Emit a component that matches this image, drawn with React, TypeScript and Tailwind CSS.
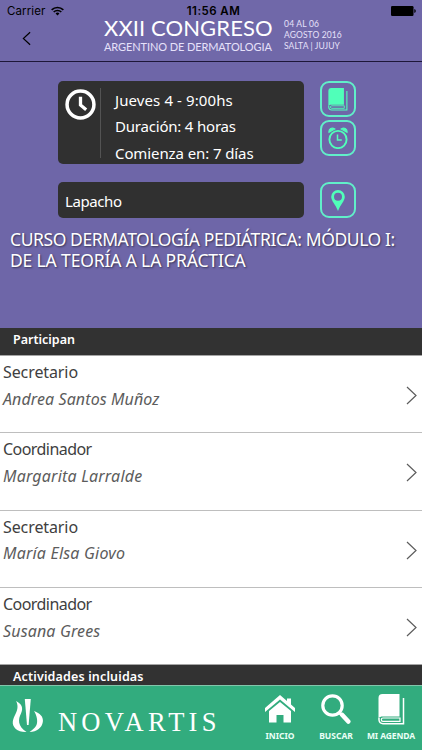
import React from 'react';

const participants = [
  { id: 1, role: 'Secretario', name: 'Andrea Santos Muñoz', roleSpacing: 'tracking-[-0.1px]', nameSpacing: 'tracking-[0.1px]' },
  { id: 2, role: 'Coordinador', name: 'Margarita Larralde', roleSpacing: 'tracking-[-0.550px]', nameSpacing: 'tracking-[0.2px]' },
  { id: 3, role: 'Secretario', name: 'María Elsa Giovo', roleSpacing: 'tracking-[-0.1px]', nameSpacing: 'tracking-[0.2px]' },
  { id: 4, role: 'Coordinador', name: 'Susana Grees', roleSpacing: 'tracking-[-0.550px]', nameSpacing: 'tracking-[0.150px]' },
];

const BookIcon = ({ className }: { className: string }) => (
  <svg viewBox="0 0 27 31" className={className} fill="none" stroke="currentColor">
    <path d="M4.500 0H21.500V22.500H4.500C3 22.500 1.500 23 .5 24.500V4Q.5 0 4.500 0Z" fill="currentColor" stroke="none" />
    <path d="M22 24H5a1.700 1.700 0 0 0 0 3.400h17Z" strokeWidth="1.200" />
    <path d="M1 24v2Q1.500 29.700 5 29.700h20.500V4" strokeWidth="1.500" />
  </svg>
);

const AlarmIcon = () => (
  <svg viewBox="0 0 20 22" className="w-5 h-[22px]" fill="none" stroke="currentColor">
    <circle cx="10" cy="12.500" r="8.600" strokeWidth="1.900" />
    <path d="M9.500 7.500v5.500h4.300" strokeWidth="1.500" />
    <path d="M1 5.300C.5 1.500 4 .2 6.800 2ZM19 5.300C19.500 1.500 16 .2 13.200 2Z" fill="currentColor" strokeWidth="1.200" />
  </svg>
);

const PinIcon = () => (
  <svg viewBox="0 0 14 21" className="w-3.5 h-[21px]" fill="currentColor">
    <path fillRule="evenodd" d="M7 0a6.800 6.800 0 0 1 6.800 6.800C13.800 11 9.500 14.500 7 21 4.500 14.500.2 11 .2 6.800A6.800 6.800 0 0 1 7 0Zm0 2.800a4 4 0 1 0 0 8 4 4 0 0 0 0-8Z" />
  </svg>
);

const ActionButton = ({ children }: { children: React.ReactNode }) => (
  <button className="w-9 h-9 shrink-0 flex items-center justify-center rounded-[9px] border-2 border-[#61efc9] text-[#50ffb9]">
    {children}
  </button>
);

const StatusBar = () => (
  <div className="h-[18px] grid grid-cols-3 items-start pt-1 pl-[7px] pr-1.5 text-black font-['Inter'] text-[11.500px] leading-[14px]">
    <div className="flex items-center">
      <span className="tracking-[0.1px]">Carrier</span>
      <svg viewBox="0 0 14 10" className="w-[13px] h-[10px] ml-1.5" fill="none" stroke="currentColor" strokeWidth="1.800">
        <path d="M.7 3.800a9 9 0 0 1 12.600 0M2.900 6.100a5.900 5.900 0 0 1 8.200 0" />
        <path d="M4.900 7.600a3 3 0 0 1 4.200 0L7 9.800Z" fill="currentColor" stroke="none" />
      </svg>
    </div>
    <span className="text-center font-semibold whitespace-nowrap tracking-[0.450px] pl-1">11:56 AM</span>
    <svg viewBox="0 0 25 10" className="w-[25px] h-[10px] mt-0.5 justify-self-end" fill="currentColor">
      <rect width="22.500" height="10" rx="1.200" />
      <path d="M23.300 3q1.500.5 1.500 2t-1.500 2Z" />
    </svg>
  </div>
);

const Header = () => (
  <header className="h-[62px] bg-[#7068a9] border-b border-[#1d1738]">
    <StatusBar />
    <div className="flex h-[38px]">
      <svg viewBox="0 0 10 16" className="w-[9px] h-[15px] ml-[22px] mt-[13px]" fill="none" stroke="#000" strokeWidth="1.300">
        <path d="M9 1 1.500 8 9 15" />
      </svg>
      <div className="ml-[73px] w-[180px] text-white font-['Lato']">
        <div className="text-[22px] leading-[20px] whitespace-nowrap tracking-[0.1px]">XXII CONGRESO</div>
        <div className="text-[11px] leading-[14px] mt-[2px] whitespace-nowrap text-[#e6e1fa] tracking-[-0.1px]">ARGENTINO DE DERMATOLOGIA</div>
      </div>
      <div className="pt-px text-[8.500px] leading-[11px] whitespace-nowrap text-[#e6e1fa] font-['Lato']">
        <div className="tracking-[0.2px]">04 AL 06</div>
        <div className="tracking-[0.1px]">AGOSTO 2016</div>
        <div className="tracking-[0.1px]">SALTA | JUJUY</div>
      </div>
    </div>
  </header>
);

const EventInfo = () => (
  <section className="h-[266px] shrink-0 bg-[#6e66a8] pt-[19px]">
    <div className="flex pl-[58px] gap-4">
      <div className="w-[246px] h-[83px] rounded-[5px] bg-[#303030] flex text-white">
        <svg viewBox="0 0 30 30" className="w-[31px] h-[31px] ml-[7px] mt-2 shrink-0" fill="none" stroke="currentColor">
          <circle cx="15" cy="15" r="13" strokeWidth="3.400" />
          <path d="M15 7.500v8l5.500 4.500" strokeWidth="3.200" />
        </svg>
        <div className="w-px h-[70px] mt-[7px] ml-1 bg-[#535353]" />
        <div className="ml-[14px] pt-[5.500px] text-[15px] leading-[26.500px] whitespace-nowrap">
          <div className="tracking-[0.1px]">Jueves 4 - 9:00hs</div>
          <div className="tracking-[-0.2px]">Duración: 4 horas</div>
          <div className="tracking-[-0.1px]">Comienza en: 7 días</div>
        </div>
      </div>
      <div className="flex flex-col gap-[3px]">
        <ActionButton><BookIcon className="w-5 h-[23px]" /></ActionButton>
        <ActionButton><AlarmIcon /></ActionButton>
      </div>
    </div>
    <div className="flex pl-[58px] gap-4 mt-[18px]">
      <div className="w-[246px] h-9 rounded-[5px] bg-[#303030] text-white text-[15px] leading-[38px] pl-[7px] tracking-[-0.4px]">Lapacho</div>
      <ActionButton><PinIcon /></ActionButton>
    </div>
    <h1 className="pl-2.5 mt-[11px] text-[17.500px] leading-[21px] text-white whitespace-nowrap [text-shadow:1px_1px_2px_rgb(0_0_0/0.5)]">
      <span className="block tracking-[-0.420px]">CURSO DERMATOLOGÍA PEDIÁTRICA: MÓDULO I:</span>
      <span className="block tracking-[-0.150px]">DE LA TEORÍA A LA PRÁCTICA</span>
    </h1>
  </section>
);

const Footer = () => (
  <footer className="h-[65px] shrink-0 bg-[#32ac7e] border-t border-[#83c5ab] flex text-white">
    <svg viewBox="0 0 31 34" className="w-[31px] h-[34px] ml-3 mt-[13px] shrink-0" fill="currentColor">
      <path d="M4 2C10 5 11.500 9 9 14.500 6 20.500 5.500 27 14.500 33 6 33.500 0 28.500 .8 22.500 1.500 17.500 5.500 13 5.500 8 5.500 5.500 5 3.500 4 2Z" />
      <path d="M12.800 0h6l-2.200 26h-1.600Z" />
      <path d="M22 12C29 15 31.500 18 30.800 23 30 28.500 25 33 17.500 33 25 28 25.500 25 25 20 24.500 17 23.500 14 22 12Z" />
    </svg>
    <div className="ml-[15px] mt-[21px] w-[205px] shrink-0 font-['Liberation_Serif'] text-[26.500px] leading-[30px] tracking-[4.200px]">NOVARTIS</div>
    <nav className="flex font-bold text-[8.500px] leading-3 whitespace-nowrap text-[#e9fff6]">
      <div className="w-[34px] flex flex-col items-center">
        <svg viewBox="0 0 30 28" className="w-[30px] h-7 mt-[9px] text-white" fill="currentColor">
          <path d="M15 0 22 6V3.500h4V9.500L30 13v4L15 4.500 0 17V13Z" />
          <path d="M15 7 26 16V27.500H18.500V20h-7v7.500H4V16Z" />
        </svg>
        <span className="mt-[7px]">INICIO</span>
      </div>
      <div className="w-[38px] ml-5 flex flex-col items-center">
        <svg viewBox="0 0 30 30" className="w-[30px] h-[30px] mt-2 text-white" fill="none" stroke="currentColor">
          <circle cx="11.500" cy="11.500" r="9.700" strokeWidth="3.200" />
          <path d="M18 18.500 21 21" strokeWidth="3" />
          <path d="m21.300 21 6 6.500" strokeWidth="4.500" strokeLinecap="round" />
        </svg>
        <span className="mt-1.5">BUSCAR</span>
      </div>
      <div className="w-[50px] ml-[11px] flex flex-col items-center">
        <BookIcon className="w-[27px] h-[31px] mt-2 text-white" />
        <span className="mt-[5px] tracking-[-0.1px]">MI AGENDA</span>
      </div>
    </nav>
  </footer>
);

const App: React.FC = () => {
  return (
    <div className="w-[422px] h-[750px] overflow-hidden flex flex-col bg-white font-['Noto_Sans']">
      <Header />
      <EventInfo />

      {/* Participants */}
      <h2 className="h-7 shrink-0 bg-[#323232] border-b border-[#a5a5a5] pl-[13px] text-white font-semibold text-[12.500px] leading-[24px]">Participan</h2>
      <ul className="flex-1 min-h-0 divide-y divide-[#bebebe]">
        {participants.map((person) => (
          <li key={person.id} className="h-[77.400px] flex items-start justify-between pl-[3px] pr-[5px]">
            <div className="pt-[3px] text-[16px] leading-[26.500px] whitespace-nowrap">
              <div className={`text-[#404040] ${person.roleSpacing}`}>{person.role}</div>
              <div className={`text-[#5c5c5c] italic ${person.nameSpacing}`}>{person.name}</div>
            </div>
            <svg viewBox="0 0 11 19" className="w-[11px] h-[19px] mt-[30px]" fill="none" stroke="#5c5c5c" strokeWidth="1.200">
              <path d="m1 1 9 8.500L1 18" />
            </svg>
          </li>
        ))}
      </ul>

      <h2 className="h-[21px] shrink-0 bg-[#323232] border-t border-[#a5a5a5] pl-[13px] text-white font-semibold text-[12.500px] leading-[23px] tracking-[0.150px]">Actividades incluidas</h2>
      <Footer />
    </div>
  );
};

export default App;
